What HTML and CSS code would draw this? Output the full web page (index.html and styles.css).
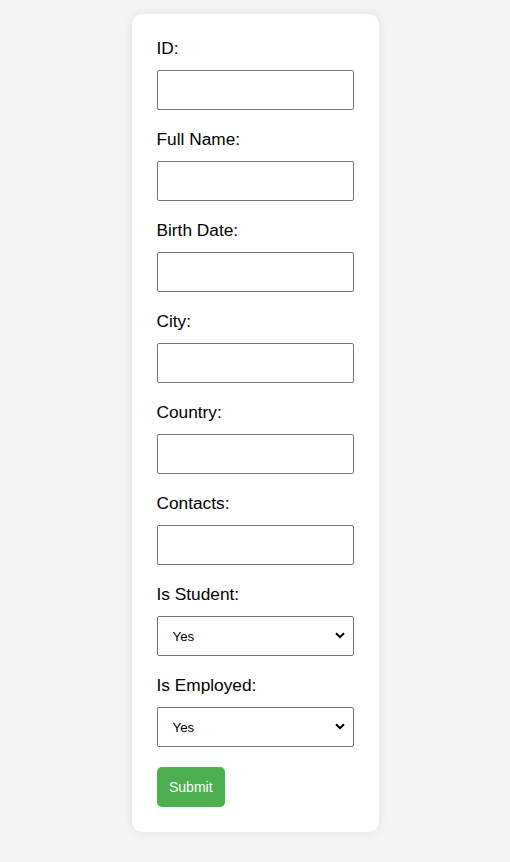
FILE: index.html
```html
<!DOCTYPE html>
<html lang="en">
<head>
<meta charset="utf-8">
<title>Form</title>
<link rel="stylesheet" href="styles.css">
</head>
<body>
<form class="card">
  <label class="field-label" for="id">ID:</label>
  <input class="field" type="text" id="id">
  <label class="field-label" for="name">Full Name:</label>
  <input class="field" type="text" id="name">
  <label class="field-label" for="birth">Birth Date:</label>
  <input class="field" type="text" id="birth">
  <label class="field-label" for="city">City:</label>
  <input class="field" type="text" id="city">
  <label class="field-label" for="country">Country:</label>
  <input class="field" type="text" id="country">
  <label class="field-label" for="contacts">Contacts:</label>
  <input class="field" type="text" id="contacts">
  <label class="field-label" for="student">Is Student:</label>
  <div class="select-wrap">
    <select class="field select" id="student"><option>Yes</option><option>No</option></select>
    <svg class="chevron" width="10" height="7" viewBox="0 0 10 7" aria-hidden="true"><path d="M1 1.2 L5 5.2 L9 1.2" fill="none" stroke="#000" stroke-width="2"/></svg>
  </div>
  <label class="field-label" for="employed">Is Employed:</label>
  <div class="select-wrap">
    <select class="field select" id="employed"><option>Yes</option><option>No</option></select>
    <svg class="chevron" width="10" height="7" viewBox="0 0 10 7" aria-hidden="true"><path d="M1 1.2 L5 5.2 L9 1.2" fill="none" stroke="#000" stroke-width="2"/></svg>
  </div>
  <button class="submit" type="button">Submit</button>
</form>
</body>
</html>
```
FILE: styles.css
```css
html, body {
  margin: 0;
  padding: 0;
}
body {
  background: #f4f4f4;
  font-family: "Liberation Sans", Arial, sans-serif;
  display: flex;
  justify-content: center;
  padding-top: 14px;
  min-height: 862px;
  box-sizing: border-box;
}
.card {
  background: #fff;
  width: 247px;
  box-sizing: border-box;
  padding: 25px;
  border-radius: 10px;
  box-shadow: 0 0 10px rgba(0, 0, 0, 0.1);
  display: flex;
  flex-direction: column;
  align-items: stretch;
  align-self: flex-start;
}
.field-label {
  display: block;
  font-size: 17.3px;
  line-height: 19px;
  color: #000;
  margin-bottom: 12px;
}
.field {
  display: block;
  box-sizing: border-box;
  width: 100%;
  height: 40px;
  margin: 0 0 20px 0;
  padding: 10px;
  border: 1px solid #767676;
  border-radius: 2px;
  background: #fff;
  font-family: "Liberation Sans", Arial, sans-serif;
  font-size: 13.33px;
  color: #000;
}
.select-wrap {
  position: relative;
}
.select {
  -webkit-appearance: none;
  appearance: none;
  padding: 0 24px 0 15px;
}
.chevron {
  position: absolute;
  right: 9px;
  top: 16px;
  pointer-events: none;
}
.submit {
  align-self: flex-start;
  background: #4caf50;
  color: #fff;
  border: none;
  border-radius: 5px;
  height: 40px;
  padding: 0 12.5px;
  font-family: "Liberation Sans", Arial, sans-serif;
  font-size: 14px;
  cursor: pointer;
}
```
